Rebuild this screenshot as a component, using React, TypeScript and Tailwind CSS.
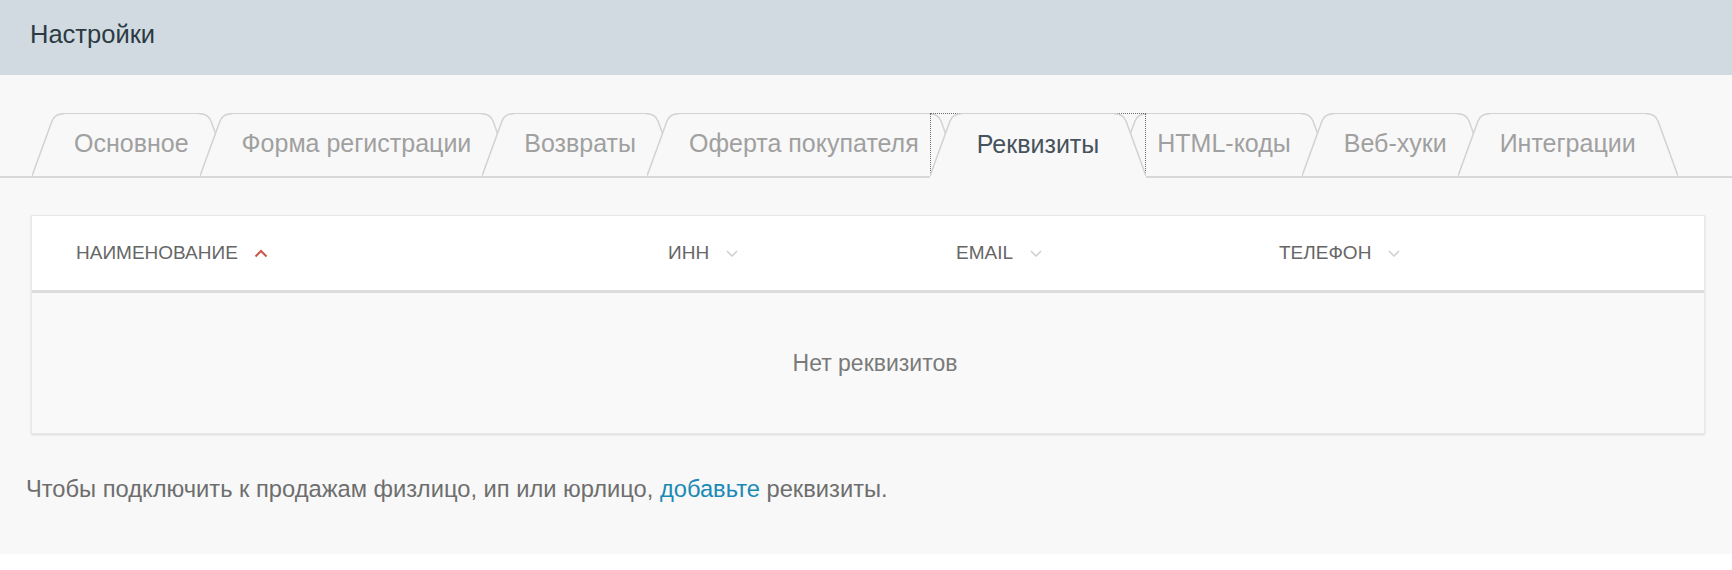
import React from "react";

const tabs = [
  "Основное",
  "Форма регистрации",
  "Возвраты",
  "Оферта покупателя",
  "Реквизиты",
  "HTML-коды",
  "Веб-хуки",
  "Интеграции",
];

const ACTIVE = 4;
const STROKE = "#d2d2d2";
const FILL = "#f8f8f8";

// left / right slanted ends of a tab
function TabEdge({ side, height }: { side: "left" | "right"; height: number }) {
  const h = 63;
  const fill =
    side === "left"
      ? `M0,${h} L20,8 Q23,0.75 31,0.75 L32,0.75 L32,${height} L0,${height} Z`
      : `M32,${h} L12,8 Q9,0.75 1,0.75 L0,0.75 L0,${height} L32,${height} Z`;
  const line =
    side === "left"
      ? `M0,${h} L20,8 Q23,0.75 31,0.75 L32,0.75`
      : `M32,${h} L12,8 Q9,0.75 1,0.75 L0,0.75`;
  return (
    <svg width="32" height={height} viewBox={`0 0 32 ${height}`} className="block shrink-0">
      <path d={fill} fill={FILL} />
      <path d={line} fill="none" stroke={STROKE} strokeWidth="1.5" />
    </svg>
  );
}

function Tab({ label, index }: { label: string; index: number }) {
  const active = index === ACTIVE;
  const height = active ? 65 : 63;
  return (
    <div
      className={`relative flex items-start ${index > 0 ? "-ml-[31px]" : ""} ${
        active ? "z-10 -mb-[2px]" : ""
      }`}
    >
      {active && (
        <div className="absolute left-0 right-0 top-0 -z-10 h-[60px] border-x border-t border-dotted border-[#6b6b6b]" />
      )}
      <TabEdge side="left" height={height} />
      <div
        className={`flex items-center self-stretch border-t-[1.5px] border-[#d2d2d2] bg-[#f8f8f8] pb-[2px] text-[25px] ${
          active ? "h-[65px] px-[15px] text-[#46525c]" : "h-[63px] px-[10px] text-[#a0a0a0]"
        }`}
      >
        {label}
      </div>
      <TabEdge side="right" height={height} />
    </div>
  );
}

function Chevron({ up }: { up?: boolean }) {
  return (
    <svg width="14" height="9" viewBox="0 0 14 9" className="shrink-0">
      {up ? (
        <path d="M1.5,7.5 L7,2 L12.5,7.5" fill="none" stroke="#c9574a" strokeWidth="2" />
      ) : (
        <path d="M2,2 L7,7 L12,2" fill="none" stroke="#cfcfcf" strokeWidth="1.5" />
      )}
    </svg>
  );
}

const columns = [
  { title: "Наименование", width: "w-[592px]", up: true },
  { title: "ИНН", width: "w-[288px]" },
  { title: "Email", width: "w-[323px]" },
  { title: "Телефон", width: "w-[300px]" },
];

export default function App() {
  return (
    <div className="min-h-[570px] bg-white font-['Liberation_Sans',Arial,sans-serif]">
      <div className="flex h-[75px] items-center bg-[#d1dae0] px-[30px] pb-[6px] text-[25.5px] text-[#2c3a44]">
        Настройки
      </div>

      <div className="bg-[#f8f8f8] pb-[46px]">
        {/* tabs */}
        <div className="flex items-end border-b-2 border-[#d8d8d8] pl-[32px] pt-[38px]">
          {tabs.map((t, i) => (
            <Tab key={t} label={t} index={i} />
          ))}
        </div>

        {/* table */}
        <div className="ml-[31px] mr-[27px] mt-[37px] border border-[#e8e8e8] shadow-[0_1px_2px_rgba(0,0,0,0.12)]">
          <div className="flex h-[77px] items-center border-b-[3px] border-[#dddddd] bg-white pl-[44px] text-[19px] uppercase text-[#666666]">
            {columns.map((c) => (
              <div key={c.title} className={`flex items-center gap-[16px] ${c.width}`}>
                <span>{c.title}</span>
                <Chevron up={c.up} />
              </div>
            ))}
          </div>
          <div className="flex h-[140px] items-center justify-center bg-[#f9f9f9] pl-[14px] text-[23px] text-[#7a7a7a]">
            Нет реквизитов
          </div>
        </div>

        <p className="mt-[38px] px-[26px] text-[23.7px] text-[#6e6e6e]">
          Чтобы подключить к продажам физлицо, ип или юрлицо,{" "}
          <a href="#" className="text-[#1b8ab4]">
            добавьте
          </a>{" "}
          реквизиты.
        </p>
      </div>
    </div>
  );
}
